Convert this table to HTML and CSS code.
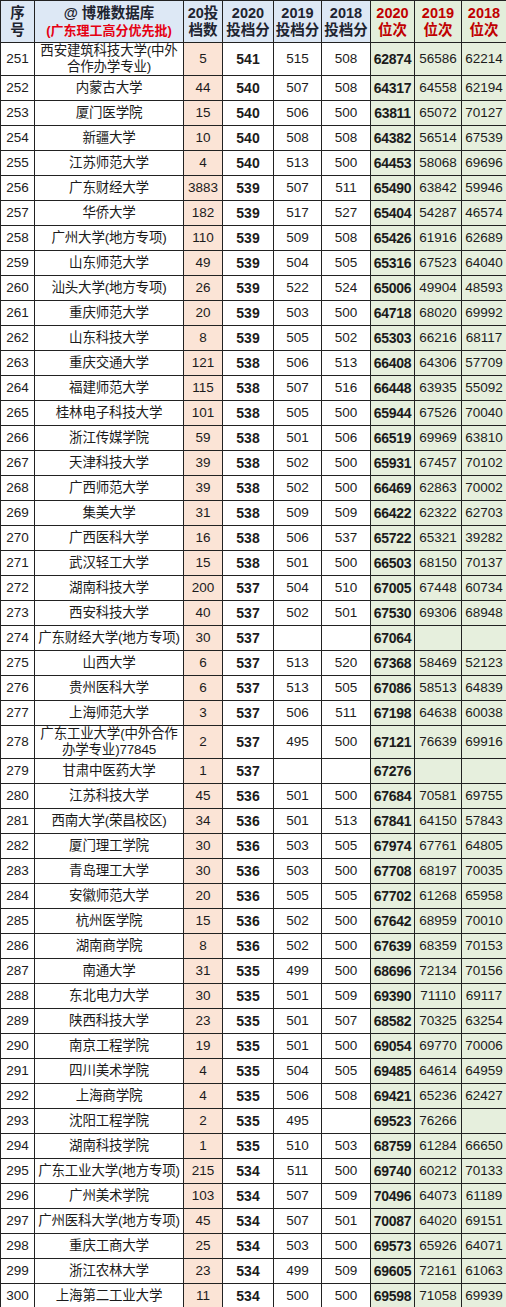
FILE: index.html
```html
<!DOCTYPE html>
<html lang="zh">
<head>
<meta charset="utf-8">
<link rel="stylesheet" href="styles.css">
</head>
<body>
<table class="tbl">
<colgroup>
<col class="w-no"><col class="w-name"><col class="w-cnt"><col class="w-s20"><col class="w-s19"><col class="w-s18"><col class="w-r20"><col class="w-r19"><col class="w-r18">
</colgroup>
<thead>
<tr class="hd">
<th>序<br>号</th>
<th><span class="brand">@ 博雅数据库</span><br><span class="red">(广东理工高分优先批)</span></th>
<th>20投<br>档数</th>
<th>2020<br>投档分</th>
<th>2019<br>投档分</th>
<th>2018<br>投档分</th>
<th class="g">2020<br>位次</th>
<th class="g">2019<br>位次</th>
<th class="g">2018<br>位次</th>
</tr>
</thead>
<tbody>
<tr class="dbl"><td>251</td><td>西安建筑科技大学(中外<br>合作办学专业)</td><td>5</td><td>541</td><td>515</td><td>508</td><td>62874</td><td>56586</td><td>62214</td></tr>
<tr><td>252</td><td>内蒙古大学</td><td>44</td><td>540</td><td>507</td><td>508</td><td>64317</td><td>64558</td><td>62194</td></tr>
<tr><td>253</td><td>厦门医学院</td><td>15</td><td>540</td><td>506</td><td>500</td><td>63811</td><td>65072</td><td>70127</td></tr>
<tr><td>254</td><td>新疆大学</td><td>10</td><td>540</td><td>508</td><td>508</td><td>64382</td><td>56514</td><td>67539</td></tr>
<tr><td>255</td><td>江苏师范大学</td><td>4</td><td>540</td><td>513</td><td>500</td><td>64453</td><td>58068</td><td>69696</td></tr>
<tr><td>256</td><td>广东财经大学</td><td>3883</td><td>539</td><td>507</td><td>511</td><td>65490</td><td>63842</td><td>59946</td></tr>
<tr><td>257</td><td>华侨大学</td><td>182</td><td>539</td><td>517</td><td>527</td><td>65404</td><td>54287</td><td>46574</td></tr>
<tr><td>258</td><td>广州大学(地方专项)</td><td>110</td><td>539</td><td>509</td><td>508</td><td>65426</td><td>61916</td><td>62689</td></tr>
<tr><td>259</td><td>山东师范大学</td><td>49</td><td>539</td><td>504</td><td>505</td><td>65316</td><td>67523</td><td>64040</td></tr>
<tr><td>260</td><td>汕头大学(地方专项)</td><td>26</td><td>539</td><td>522</td><td>524</td><td>65006</td><td>49904</td><td>48593</td></tr>
<tr><td>261</td><td>重庆师范大学</td><td>20</td><td>539</td><td>503</td><td>500</td><td>64718</td><td>68020</td><td>69992</td></tr>
<tr><td>262</td><td>山东科技大学</td><td>8</td><td>539</td><td>505</td><td>502</td><td>65303</td><td>66216</td><td>68117</td></tr>
<tr><td>263</td><td>重庆交通大学</td><td>121</td><td>538</td><td>506</td><td>513</td><td>66408</td><td>64306</td><td>57709</td></tr>
<tr><td>264</td><td>福建师范大学</td><td>115</td><td>538</td><td>507</td><td>516</td><td>66448</td><td>63935</td><td>55092</td></tr>
<tr><td>265</td><td>桂林电子科技大学</td><td>101</td><td>538</td><td>505</td><td>500</td><td>65944</td><td>67526</td><td>70040</td></tr>
<tr><td>266</td><td>浙江传媒学院</td><td>59</td><td>538</td><td>501</td><td>506</td><td>66519</td><td>69969</td><td>63810</td></tr>
<tr><td>267</td><td>天津科技大学</td><td>39</td><td>538</td><td>502</td><td>500</td><td>65931</td><td>67457</td><td>70102</td></tr>
<tr><td>268</td><td>广西师范大学</td><td>39</td><td>538</td><td>502</td><td>500</td><td>66469</td><td>62863</td><td>70002</td></tr>
<tr><td>269</td><td>集美大学</td><td>31</td><td>538</td><td>509</td><td>509</td><td>66422</td><td>62322</td><td>62703</td></tr>
<tr><td>270</td><td>广西医科大学</td><td>16</td><td>538</td><td>506</td><td>537</td><td>65722</td><td>65321</td><td>39282</td></tr>
<tr><td>271</td><td>武汉轻工大学</td><td>15</td><td>538</td><td>501</td><td>500</td><td>66503</td><td>68150</td><td>70137</td></tr>
<tr><td>272</td><td>湖南科技大学</td><td>200</td><td>537</td><td>504</td><td>510</td><td>67005</td><td>67448</td><td>60734</td></tr>
<tr><td>273</td><td>西安科技大学</td><td>40</td><td>537</td><td>502</td><td>501</td><td>67530</td><td>69306</td><td>68948</td></tr>
<tr><td>274</td><td>广东财经大学(地方专项)</td><td>30</td><td>537</td><td></td><td></td><td>67064</td><td></td><td></td></tr>
<tr><td>275</td><td>山西大学</td><td>6</td><td>537</td><td>513</td><td>520</td><td>67368</td><td>58469</td><td>52123</td></tr>
<tr><td>276</td><td>贵州医科大学</td><td>6</td><td>537</td><td>513</td><td>505</td><td>67086</td><td>58513</td><td>64839</td></tr>
<tr><td>277</td><td>上海师范大学</td><td>3</td><td>537</td><td>506</td><td>511</td><td>67198</td><td>64638</td><td>60038</td></tr>
<tr class="dbl dbl2"><td>278</td><td>广东工业大学(中外合作<br>办学专业)77845</td><td>2</td><td>537</td><td>495</td><td>500</td><td>67121</td><td>76639</td><td>69916</td></tr>
<tr><td>279</td><td>甘肃中医药大学</td><td>1</td><td>537</td><td></td><td></td><td>67276</td><td></td><td></td></tr>
<tr><td>280</td><td>江苏科技大学</td><td>45</td><td>536</td><td>501</td><td>500</td><td>67684</td><td>70581</td><td>69755</td></tr>
<tr><td>281</td><td>西南大学(荣昌校区)</td><td>34</td><td>536</td><td>501</td><td>513</td><td>67841</td><td>64150</td><td>57843</td></tr>
<tr><td>282</td><td>厦门理工学院</td><td>30</td><td>536</td><td>503</td><td>505</td><td>67974</td><td>67761</td><td>64805</td></tr>
<tr><td>283</td><td>青岛理工大学</td><td>30</td><td>536</td><td>503</td><td>500</td><td>67708</td><td>68197</td><td>70035</td></tr>
<tr><td>284</td><td>安徽师范大学</td><td>20</td><td>536</td><td>505</td><td>505</td><td>67702</td><td>61268</td><td>65958</td></tr>
<tr><td>285</td><td>杭州医学院</td><td>15</td><td>536</td><td>502</td><td>500</td><td>67642</td><td>68959</td><td>70010</td></tr>
<tr><td>286</td><td>湖南商学院</td><td>8</td><td>536</td><td>502</td><td>500</td><td>67639</td><td>68359</td><td>70153</td></tr>
<tr><td>287</td><td>南通大学</td><td>31</td><td>535</td><td>499</td><td>500</td><td>68696</td><td>72134</td><td>70156</td></tr>
<tr><td>288</td><td>东北电力大学</td><td>30</td><td>535</td><td>501</td><td>509</td><td>69390</td><td>71110</td><td>69117</td></tr>
<tr><td>289</td><td>陕西科技大学</td><td>23</td><td>535</td><td>501</td><td>507</td><td>68582</td><td>70325</td><td>63254</td></tr>
<tr><td>290</td><td>南京工程学院</td><td>19</td><td>535</td><td>501</td><td>500</td><td>69054</td><td>69770</td><td>70006</td></tr>
<tr><td>291</td><td>四川美术学院</td><td>4</td><td>535</td><td>504</td><td>505</td><td>69485</td><td>64614</td><td>64959</td></tr>
<tr><td>292</td><td>上海商学院</td><td>4</td><td>535</td><td>506</td><td>508</td><td>69421</td><td>65236</td><td>62427</td></tr>
<tr><td>293</td><td>沈阳工程学院</td><td>2</td><td>535</td><td>495</td><td></td><td>69523</td><td>76266</td><td></td></tr>
<tr><td>294</td><td>湖南科技学院</td><td>1</td><td>535</td><td>510</td><td>503</td><td>68759</td><td>61284</td><td>66650</td></tr>
<tr><td>295</td><td>广东工业大学(地方专项)</td><td>215</td><td>534</td><td>511</td><td>500</td><td>69740</td><td>60212</td><td>70133</td></tr>
<tr><td>296</td><td>广州美术学院</td><td>103</td><td>534</td><td>507</td><td>509</td><td>70496</td><td>64073</td><td>61189</td></tr>
<tr><td>297</td><td>广州医科大学(地方专项)</td><td>45</td><td>534</td><td>507</td><td>501</td><td>70087</td><td>64020</td><td>69151</td></tr>
<tr><td>298</td><td>重庆工商大学</td><td>25</td><td>534</td><td>503</td><td>500</td><td>69573</td><td>65926</td><td>64071</td></tr>
<tr><td>299</td><td>浙江农林大学</td><td>23</td><td>534</td><td>499</td><td>509</td><td>69605</td><td>72161</td><td>61063</td></tr>
<tr><td>300</td><td>上海第二工业大学</td><td>11</td><td>534</td><td>500</td><td>500</td><td>69598</td><td>71058</td><td>69939</td></tr>
</tbody>
</table>
</body>
</html>
```

FILE: styles.css
```css
html, body {
  margin: 0;
  padding: 0;
  background: #ffffff;
}

.tbl {
  width: 506px;
  table-layout: fixed;
  border-collapse: collapse;
  font-family: "Liberation Sans", "Noto Sans CJK SC", sans-serif;
  color: #1b1b1b;
}

.w-no { width: 34px; }
.w-name { width: 149px; }
.w-cnt { width: 39px; }
.w-s20 { width: 51px; }
.w-s19 { width: 48px; }
.w-s18 { width: 49px; }
.w-r20 { width: 44px; }
.w-r19 { width: 47px; }
.w-r18 { width: 45px; }

.tbl th,
.tbl td {
  border: 1px solid #222;
  padding: 0;
  text-align: center;
  vertical-align: middle;
  overflow: hidden;
  white-space: nowrap;
}

.tbl th {
  height: 41px;
  background: #dde8f5;
  font-size: 14.5px;
  font-weight: bold;
  line-height: 17px;
  color: #1e2430;
}

.tbl th.g {
  background: #e3eedb;
  color: #c00000;
}

.brand {
  font-weight: 600;
}

.red {
  color: #e60012;
  font-size: 13px;
  font-weight: bold;
}

.tbl td {
  height: 24px;
  font-size: 13.5px;
  line-height: 16px;
}

.tbl .dbl td {
  height: 31px;
}

.tbl .dbl2 td {
  height: 32px;
}

.tbl td:nth-child(2) {
  font-size: 13.5px;
  letter-spacing: -0.2px;
}

.tbl td:nth-child(3) {
  background: #fbe4d6;
}

.tbl td:nth-child(4) {
  font-weight: bold;
  font-size: 14px;
}

.tbl td:nth-child(7),
.tbl td:nth-child(8),
.tbl td:nth-child(9) {
  background: #e6efdd;
}

.tbl td:nth-child(7) {
  font-weight: bold;
  font-size: 14px;
  letter-spacing: -0.3px;
}
```
